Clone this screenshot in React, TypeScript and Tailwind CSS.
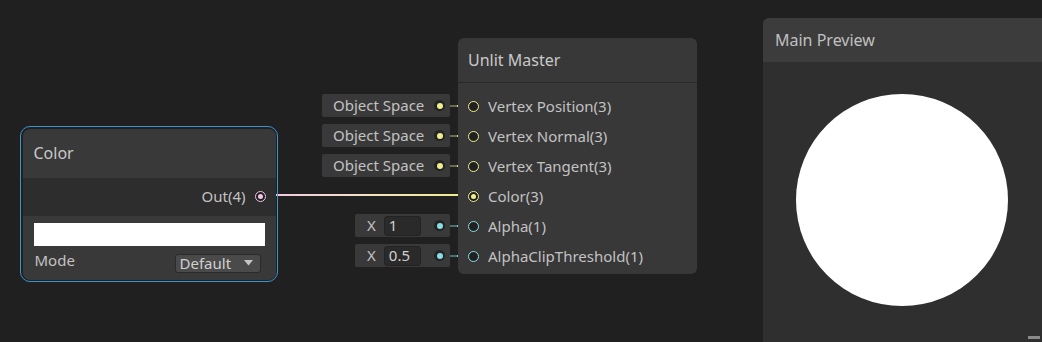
import type { ReactNode } from "react";

type Tone = "yellow" | "cyan" | "pink";

const ring: Record<Tone, string> = {
  yellow: "border-[#f1ef8c]",
  cyan: "border-[#86e0e6]",
  pink: "border-[#f0c4e6]",
};

const dot: Record<Tone, string> = {
  yellow: "bg-[#f1ef8c]",
  cyan: "bg-[#86e0e6]",
  pink: "bg-[#f0c4e6]",
};

const wire: Record<Tone, string> = {
  yellow: "bg-[#6b6b4c]",
  cyan: "bg-[#4a6e70]",
  pink: "bg-[#6e5a68]",
};

// slot circle on a node edge
function Port({ tone, filled = false }: { tone: Tone; filled?: boolean }) {
  return (
    <div
      className={`w-[11px] h-[11px] rounded-full border-[1.5px] ${ring[tone]} bg-[#202020] flex items-center justify-center shrink-0`}
    >
      {filled && <div className={`w-[5px] h-[5px] rounded-full ${dot[tone]}`} />}
    </div>
  );
}

// little inline value box that feeds a master slot
function InputChip({
  tone,
  width,
  children,
}: {
  tone: Tone;
  width: string;
  children: ReactNode;
}) {
  return (
    <div className="flex items-center">
      <div
        className={`${width} h-[23px] bg-[#393939] rounded-[2px] flex items-center pl-[11px] pr-[5px]`}
      >
        <div className="flex-1 flex items-center">{children}</div>
        <div className="w-[11px] h-[11px] rounded-full bg-[#242424] flex items-center justify-center">
          <div className={`w-[6px] h-[6px] rounded-full ${dot[tone]}`} />
        </div>
      </div>
      <div className={`w-[19px] h-[2px] ${wire[tone]} flex justify-center`}>
        <div className={`w-[6px] h-[2px] ${dot[tone]} opacity-80`} />
      </div>
    </div>
  );
}

function NumberBox({ value }: { value: string }) {
  return (
    <div className="flex items-center gap-[8px] pl-[1px]">
      <span>X</span>
      <div className="w-[37px] h-[20px] rounded-[3px] bg-[#2a2a2a] border border-[#232323] flex items-center pl-[4px] text-[#d0d0d0]">
        {value}
      </div>
    </div>
  );
}

const slots: { label: string; tone: Tone; filled?: boolean }[] = [
  { label: "Vertex Position(3)", tone: "yellow" },
  { label: "Vertex Normal(3)", tone: "yellow" },
  { label: "Vertex Tangent(3)", tone: "yellow" },
  { label: "Color(3)", tone: "yellow", filled: true },
  { label: "Alpha(1)", tone: "cyan" },
  { label: "AlphaClipThreshold(1)", tone: "cyan" },
];

export default function App() {
  return (
    <div
      className="relative w-[1042px] h-[342px] bg-[#202020] overflow-hidden text-[15px] text-[#c2c2c2]"
      style={{ fontFamily: '"Noto Sans", "DejaVu Sans", sans-serif' }}
    >
      {/* edge: Color.Out -> Unlit Master.Color */}
      <div className="absolute left-[264px] top-[194px] w-[205px] h-[2px] bg-gradient-to-r from-[#f0c4e6] via-[#f3e2c4] to-[#eeec88]" />
      <div className="absolute left-[264px] top-[196px] w-[12px] h-[1px] bg-[#6e5a68]" />

      {/* Color node */}
      <div className="absolute left-[20px] top-[126px] w-[258px] h-[156px] rounded-[10px] border-[1.5px] border-[#3a94d2] p-[1.5px]">
        <div className="w-full h-full rounded-[7px] overflow-hidden bg-[#393939] flex flex-col">
          <div className="h-[49px] flex items-center px-[11px] text-[16px] text-[#c8c8c8] shrink-0">
            Color
          </div>
          <div className="h-[38px] bg-[#2d2d2d] flex items-center justify-end gap-[9px] pr-[10px] shrink-0">
            <span>Out(4)</span>
            <Port tone="pink" filled />
          </div>
          <div className="flex-1 px-[11px] pt-[7px] flex flex-col">
            <div className="h-[23px] bg-white" />
            <div className="flex items-start justify-between mt-[4px] pl-[1px] pr-[4px]">
              <span className="leading-[20px]">Mode</span>
              <div className="w-[86px] h-[19px] rounded-[3px] bg-[#4a4a4a] border border-[#2a2a2a] flex items-center justify-between pl-[4px] pr-[7px] text-[#d0d0d0] mt-[4px]">
                <span className="leading-none">Default</span>
                <svg width="9" height="6" viewBox="0 0 9 6">
                  <path d="M0 0H9L4.5 5.5Z" fill="#c4c4c4" />
                </svg>
              </div>
            </div>
          </div>
        </div>
      </div>

      {/* inline inputs on the master node */}
      <div className="absolute left-[322px] top-[94px] flex flex-col gap-[7px]">
        <InputChip tone="yellow" width="w-[128px]">Object Space</InputChip>
        <InputChip tone="yellow" width="w-[128px]">Object Space</InputChip>
        <InputChip tone="yellow" width="w-[128px]">Object Space</InputChip>
      </div>
      <div className="absolute left-[355px] top-[214px] flex flex-col gap-[7px]">
        <InputChip tone="cyan" width="w-[95px]">
          <NumberBox value="1" />
        </InputChip>
        <InputChip tone="cyan" width="w-[95px]">
          <NumberBox value="0.5" />
        </InputChip>
      </div>

      {/* Unlit Master node */}
      <div className="absolute left-[458px] top-[38px] w-[239px] h-[236px] rounded-[6px] bg-[#383838] flex flex-col">
        <div className="h-[45px] border-b border-[#2a2a2a] flex items-center px-[10px] text-[16px] text-[#c8c8c8]">
          Unlit Master
        </div>
        <div className="flex flex-col pt-[8px]">
          {slots.map((s) => (
            <div key={s.label} className="h-[30px] flex items-center gap-[9px] pl-[10px]">
              <Port tone={s.tone} filled={s.filled} />
              <span>{s.label}</span>
            </div>
          ))}
        </div>
      </div>

      {/* Main Preview */}
      <div className="absolute left-[763px] top-[18px] w-[290px] h-[330px] rounded-[6px] overflow-hidden bg-[#2f2f2f] flex flex-col">
        <div className="h-[44px] bg-[#3c3c3c] flex items-center px-[12px] text-[16px] text-[#c0c0c0] shrink-0">
          Main Preview
        </div>
        <div className="flex-1 pt-[32px] pl-[33px]">
          <div className="w-[212px] h-[212px] rounded-full bg-white" />
        </div>
      </div>
      <div className="absolute left-[1028px] top-[336px] w-[12px] h-[3px] bg-[#8a8a8a]" />
    </div>
  );
}
